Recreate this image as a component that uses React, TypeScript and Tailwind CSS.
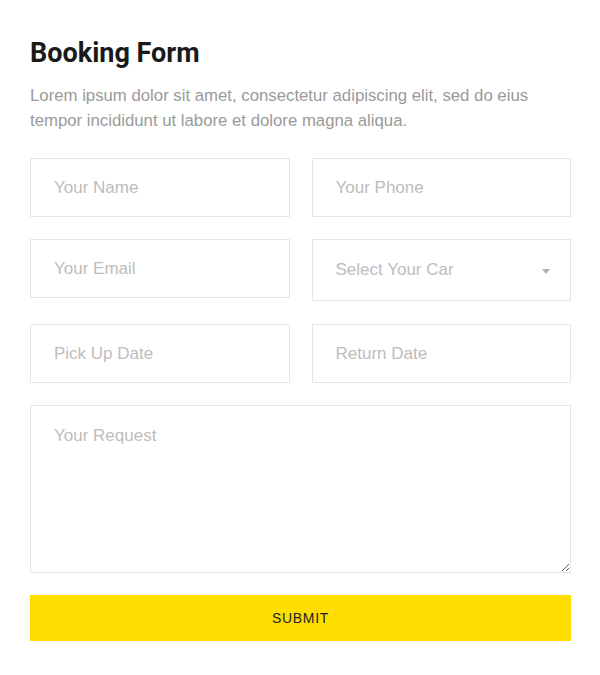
import React from "react";

const inputCls =
  "block w-full h-[59px] border border-[#e6e6e6] bg-white px-[23px] text-[17px] text-[#555] placeholder:text-[#bdbdbd] outline-none";

export default function App() {
  return (
    <div
      className="w-[600px] min-h-[675px] bg-white px-[30px] pt-[36px]"
      style={{ fontFamily: '"Liberation Sans", Arial, sans-serif' }}
    >
      <h1
        className="text-[27px] leading-[34px] font-bold text-[#1a1a1a]"
        style={{ fontFamily: 'Roboto, "Liberation Sans", sans-serif' }}
      >
        Booking Form
      </h1>
      <p className="mt-[13px] text-[16.75px] leading-[25px] text-[#9a9a9a]">
        Lorem ipsum dolor sit amet, consectetur adipiscing elit, sed do eius
        tempor incididunt ut labore et dolore magna aliqua.
      </p>

      <div className="mt-[25px] w-[541px] grid grid-cols-2 gap-x-[22px] gap-y-[22px] items-start">
        <input className={inputCls} placeholder="Your Name" />
        <input className={inputCls} placeholder="Your Phone" />
        <input className={inputCls} placeholder="Your Email" />
        <div className="relative h-[62px] border border-[#e6e6e6] bg-white px-[23px] flex items-center">
          <span className="text-[17px] text-[#bdbdbd]">Select Your Car</span>
          <span className="absolute right-[20px] top-[29px] w-0 h-0 border-l-[4.5px] border-r-[4.5px] border-t-[5px] border-l-transparent border-r-transparent border-t-[#b0b0b0]" />
        </div>
      </div>
      <div className="mt-[23px] w-[541px] grid grid-cols-2 gap-x-[22px]">
        <input className={inputCls} placeholder="Pick Up Date" />
        <input className={inputCls} placeholder="Return Date" />
      </div>
      <textarea
        className="mt-[22px] block w-[541px] h-[168px] border border-[#e6e6e6] bg-white px-[23px] pt-[19px] text-[17px] leading-[22px] text-[#555] placeholder:text-[#bdbdbd] outline-none"
        placeholder="Your Request"
      />
      <button className="mt-[22px] block w-[541px] h-[46px] bg-[#ffdd00] text-[14px] tracking-[0.7px] text-[#222]">
        SUBMIT
      </button>
    </div>
  );
}
